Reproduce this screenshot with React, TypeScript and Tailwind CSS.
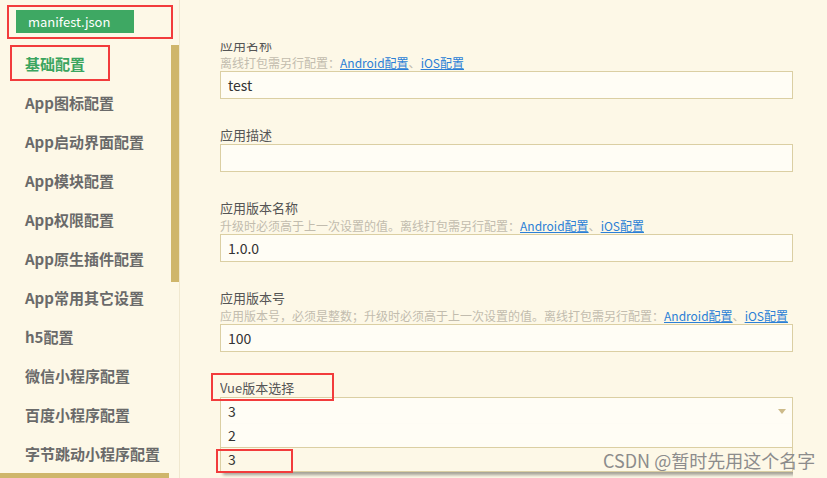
import React from "react";

const font = { fontFamily: '"Noto Sans CJK SC", "Noto Sans", sans-serif' };

const items = [
  "基础配置",
  "App图标配置",
  "App启动界面配置",
  "App模块配置",
  "App权限配置",
  "App原生插件配置",
  "App常用其它设置",
  "h5配置",
  "微信小程序配置",
  "百度小程序配置",
  "字节跳动小程序配置",
];

function Links() {
  return (
    <>
      <span className="text-[#2b7fd6] underline">Android配置</span>
      <span>、</span>
      <span className="text-[#2b7fd6] underline">iOS配置</span>
    </>
  );
}

function Field({
  label,
  hint,
  value,
}: {
  label: string;
  hint?: React.ReactNode;
  value: string;
}) {
  return (
    <div className="mb-[27px]">
      <div className="h-[18px] leading-[18px] text-[13px] text-[#555]">{label}</div>
      {hint && (
        <div className="h-[17px] leading-[17px] text-[12px] text-[#c2bcae] whitespace-nowrap">
          {hint}
        </div>
      )}
      <div className="h-[28px] border border-[#dbcfa3] bg-[#fffdf5] px-[7px] flex items-center text-[14px] text-[#333]">
        {value}
      </div>
    </div>
  );
}

export default function App() {
  return (
    <div
      className="relative flex w-[827px] h-[478px] overflow-hidden bg-[#fdf8e7]"
      style={font}
    >
      {/* Sidebar */}
      <div className="relative w-[180px] h-full border-r border-[#f0e8cf] flex flex-col shrink-0">
        <div className="h-[45px] pt-[10px] pl-[16px]">
          <div className="w-[118px] h-[23px] bg-[#3ea863] text-white text-[13px] leading-[23px] pl-[12px]">
            manifest.json
          </div>
        </div>
        <div className="relative flex-1 overflow-hidden">
          {items.map((t, i) => (
            <div
              key={t}
              className={`h-[39px] flex items-center pl-[25px] text-[15px] font-bold whitespace-nowrap ${
                i === 0 ? "text-[#3ba55f]" : "text-[#6a6a6a]"
              }`}
            >
              {t}
            </div>
          ))}
          <div className="absolute left-[171px] top-0 w-[8px] h-[237px] bg-[#cfb66b]" />
          <div className="absolute left-0 bottom-0 w-[169px] h-[5px] bg-[#cfb66b]" />
        </div>
      </div>

      {/* Content */}
      <div className="flex-1 pt-[43px] pl-[40px] pr-[34px] h-full">
        <div className="h-full overflow-hidden">
          <div className="mt-[-7px]">
            <Field
              label="应用名称"
              hint={
                <>
                  离线打包需另行配置：<Links />
                </>
              }
              value="test"
            />
            <Field label="应用描述" value="" />
            <Field
              label="应用版本名称"
              hint={
                <>
                  升级时必须高于上一次设置的值。离线打包需另行配置：<Links />
                </>
              }
              value="1.0.0"
            />
            <Field
              label="应用版本号"
              hint={
                <>
                  应用版本号，必须是整数；升级时必须高于上一次设置的值。离线打包需另行配置：<Links />
                </>
              }
              value="100"
            />
            <div className="relative">
              <div className="h-[18px] leading-[18px] text-[13px] text-[#555]">Vue版本选择</div>
              <div className="relative h-[28px] border border-[#dbcfa3] bg-[#fffdf5] px-[7px] flex items-center text-[14px] text-[#333]">
                3
                <div className="absolute right-[6px] top-[11px] w-0 h-0 border-l-[4px] border-r-[4px] border-t-[5px] border-l-transparent border-r-transparent border-t-[#cdbb8a]" />
              </div>
              <div className="absolute left-0 right-0 top-[45px] bg-[#fffdf5] border-x border-b border-[#dbcfa3] shadow-[3px_3px_3px_rgba(0,0,0,0.35)] text-[14px] text-[#333]">
                <div className="h-[24px] flex items-center px-[7px] border-b border-[#dbcfa3]">2</div>
                <div className="h-[23px] flex items-center px-[7px] bg-[#fdf8e7]">3</div>
              </div>
            </div>
          </div>
        </div>
      </div>

      {/* Annotation boxes */}
      <div className="absolute left-[7px] top-[5px] w-[166px] h-[34px] border-2 border-[#f23c3c]" />
      <div className="absolute left-[10px] top-[45px] w-[100px] h-[36px] border-2 border-[#f23c3c]" />
      <div className="absolute left-[211px] top-[373px] w-[123px] h-[28px] border-2 border-[#f23c3c]" />
      <div className="absolute left-[216px] top-[449px] w-[77px] h-[24px] border-2 border-[#f23c3c]" />

      {/* Watermark */}
      <div className="absolute left-[603px] top-[448px] text-[18px] leading-[24px] text-[#8c8c8c] whitespace-nowrap">
        CSDN @暂时先用这个名字
      </div>
    </div>
  );
}
